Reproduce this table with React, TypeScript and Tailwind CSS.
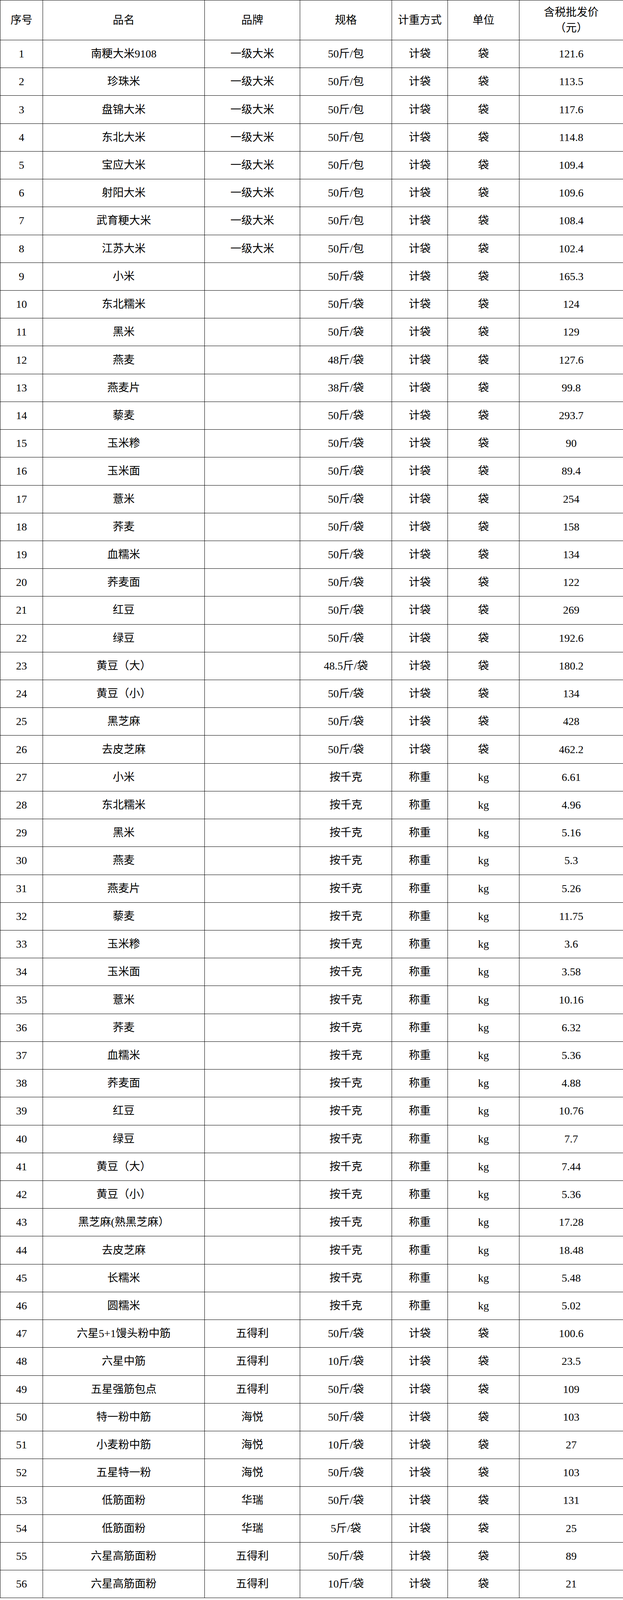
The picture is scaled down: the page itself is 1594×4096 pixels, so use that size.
const rows: [string, string, string, string, string, string][] = [
  ["南粳大米9108", "一级大米", "50斤/包", "计袋", "袋", "121.6"],
  ["珍珠米", "一级大米", "50斤/包", "计袋", "袋", "113.5"],
  ["盘锦大米", "一级大米", "50斤/包", "计袋", "袋", "117.6"],
  ["东北大米", "一级大米", "50斤/包", "计袋", "袋", "114.8"],
  ["宝应大米", "一级大米", "50斤/包", "计袋", "袋", "109.4"],
  ["射阳大米", "一级大米", "50斤/包", "计袋", "袋", "109.6"],
  ["武育粳大米", "一级大米", "50斤/包", "计袋", "袋", "108.4"],
  ["江苏大米", "一级大米", "50斤/包", "计袋", "袋", "102.4"],
  ["小米", "", "50斤/袋", "计袋", "袋", "165.3"],
  ["东北糯米", "", "50斤/袋", "计袋", "袋", "124"],
  ["黑米", "", "50斤/袋", "计袋", "袋", "129"],
  ["燕麦", "", "48斤/袋", "计袋", "袋", "127.6"],
  ["燕麦片", "", "38斤/袋", "计袋", "袋", "99.8"],
  ["藜麦", "", "50斤/袋", "计袋", "袋", "293.7"],
  ["玉米糁", "", "50斤/袋", "计袋", "袋", "90"],
  ["玉米面", "", "50斤/袋", "计袋", "袋", "89.4"],
  ["薏米", "", "50斤/袋", "计袋", "袋", "254"],
  ["荞麦", "", "50斤/袋", "计袋", "袋", "158"],
  ["血糯米", "", "50斤/袋", "计袋", "袋", "134"],
  ["荞麦面", "", "50斤/袋", "计袋", "袋", "122"],
  ["红豆", "", "50斤/袋", "计袋", "袋", "269"],
  ["绿豆", "", "50斤/袋", "计袋", "袋", "192.6"],
  ["黄豆（大）", "", "48.5斤/袋", "计袋", "袋", "180.2"],
  ["黄豆（小）", "", "50斤/袋", "计袋", "袋", "134"],
  ["黑芝麻", "", "50斤/袋", "计袋", "袋", "428"],
  ["去皮芝麻", "", "50斤/袋", "计袋", "袋", "462.2"],
  ["小米", "", "按千克", "称重", "kg", "6.61"],
  ["东北糯米", "", "按千克", "称重", "kg", "4.96"],
  ["黑米", "", "按千克", "称重", "kg", "5.16"],
  ["燕麦", "", "按千克", "称重", "kg", "5.3"],
  ["燕麦片", "", "按千克", "称重", "kg", "5.26"],
  ["藜麦", "", "按千克", "称重", "kg", "11.75"],
  ["玉米糁", "", "按千克", "称重", "kg", "3.6"],
  ["玉米面", "", "按千克", "称重", "kg", "3.58"],
  ["薏米", "", "按千克", "称重", "kg", "10.16"],
  ["荞麦", "", "按千克", "称重", "kg", "6.32"],
  ["血糯米", "", "按千克", "称重", "kg", "5.36"],
  ["荞麦面", "", "按千克", "称重", "kg", "4.88"],
  ["红豆", "", "按千克", "称重", "kg", "10.76"],
  ["绿豆", "", "按千克", "称重", "kg", "7.7"],
  ["黄豆（大）", "", "按千克", "称重", "kg", "7.44"],
  ["黄豆（小）", "", "按千克", "称重", "kg", "5.36"],
  ["黑芝麻(熟黑芝麻）", "", "按千克", "称重", "kg", "17.28"],
  ["去皮芝麻", "", "按千克", "称重", "kg", "18.48"],
  ["长糯米", "", "按千克", "称重", "kg", "5.48"],
  ["圆糯米", "", "按千克", "称重", "kg", "5.02"],
  ["六星5+1馒头粉中筋", "五得利", "50斤/袋", "计袋", "袋", "100.6"],
  ["六星中筋", "五得利", "10斤/袋", "计袋", "袋", "23.5"],
  ["五星强筋包点", "五得利", "50斤/袋", "计袋", "袋", "109"],
  ["特一粉中筋", "海悦", "50斤/袋", "计袋", "袋", "103"],
  ["小麦粉中筋", "海悦", "10斤/袋", "计袋", "袋", "27"],
  ["五星特一粉", "海悦", "50斤/袋", "计袋", "袋", "103"],
  ["低筋面粉", "华瑞", "50斤/袋", "计袋", "袋", "131"],
  ["低筋面粉", "华瑞", "5斤/袋", "计袋", "袋", "25"],
  ["六星高筋面粉", "五得利", "50斤/袋", "计袋", "袋", "89"],
  ["六星高筋面粉", "五得利", "10斤/袋", "计袋", "袋", "21"],
];

const cell = "border border-black text-center align-middle p-0 font-normal";

export default function App() {
  return (
    <div className="w-[1594px] bg-white text-black text-[28px] leading-[40px] font-['Liberation_Serif','Noto_Sans_CJK_SC',serif]">
      <table className="w-[1594px] table-fixed border-collapse">
        <colgroup>
          <col className="w-[109px]" />
          <col className="w-[414px]" />
          <col className="w-[244px]" />
          <col className="w-[235px]" />
          <col className="w-[143px]" />
          <col className="w-[183px]" />
          <col className="w-[266px]" />
        </colgroup>
        <thead>
          <tr className="h-[102px]">
            <th className={cell}>序号</th>
            <th className={cell}>品名</th>
            <th className={cell}>品牌</th>
            <th className={cell}>规格</th>
            <th className={cell}>计重方式</th>
            <th className={cell}>单位</th>
            <th className={cell}>含税批发价<br />（元）</th>
          </tr>
        </thead>
        <tbody>
          {rows.map((r, i) => (
            <tr key={i} className="h-[71.23px]">
              <td className={cell}>{i + 1}</td>
              {r.map((v, j) => (
                <td key={j} className={cell}>{v}</td>
              ))}
            </tr>
          ))}
        </tbody>
      </table>
    </div>
  );
}
